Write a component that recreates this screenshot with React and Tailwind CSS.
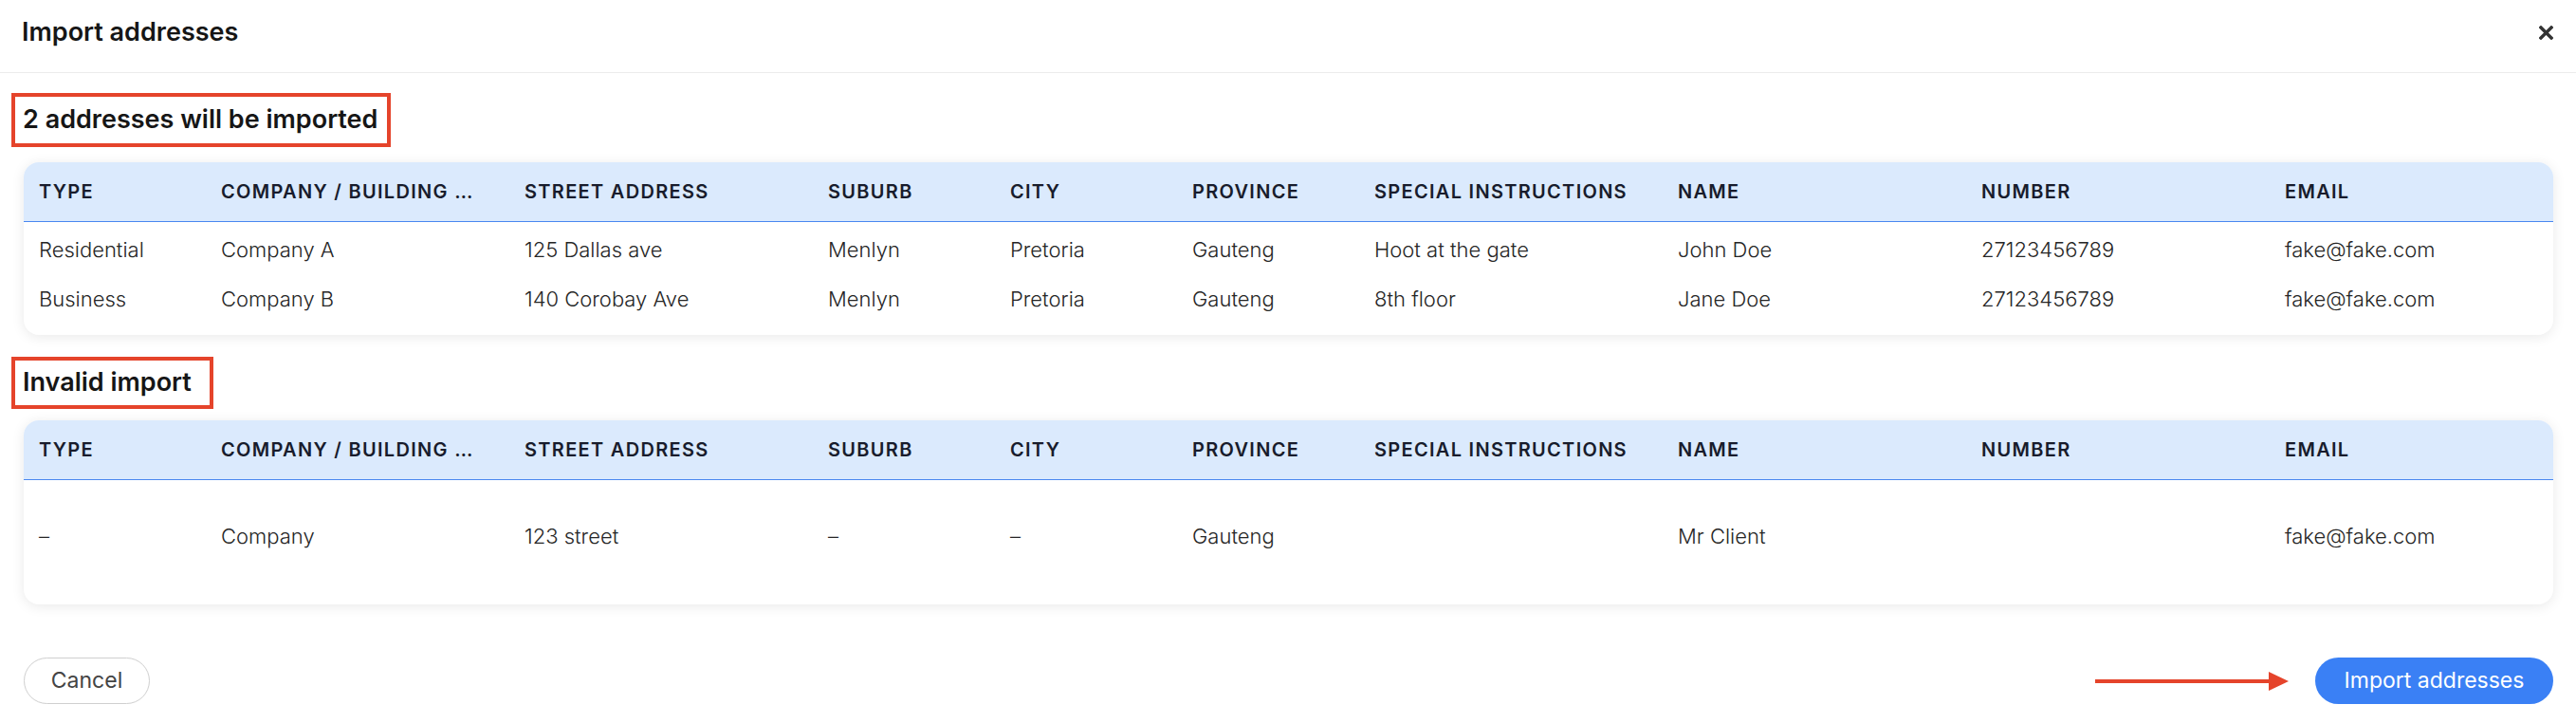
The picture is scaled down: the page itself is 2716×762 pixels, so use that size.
import React from "react";

const COLS = [
  { key: "type", label: "TYPE" },
  { key: "company", label: "COMPANY / BUILDING …" },
  { key: "street", label: "STREET ADDRESS" },
  { key: "suburb", label: "SUBURB" },
  { key: "city", label: "CITY" },
  { key: "province", label: "PROVINCE" },
  { key: "instructions", label: "SPECIAL INSTRUCTIONS" },
  { key: "name", label: "NAME" },
  { key: "number", label: "NUMBER" },
  { key: "email", label: "EMAIL" },
];

const VALID = [
  {
    type: "Residential",
    company: "Company A",
    street: "125 Dallas ave",
    suburb: "Menlyn",
    city: "Pretoria",
    province: "Gauteng",
    instructions: "Hoot at the gate",
    name: "John Doe",
    number: "27123456789",
    email: "fake@fake.com",
  },
  {
    type: "Business",
    company: "Company B",
    street: "140 Corobay Ave",
    suburb: "Menlyn",
    city: "Pretoria",
    province: "Gauteng",
    instructions: "8th floor",
    name: "Jane Doe",
    number: "27123456789",
    email: "fake@fake.com",
  },
];

const INVALID = [
  {
    type: "–",
    company: "Company",
    street: "123 street",
    suburb: "–",
    city: "–",
    province: "Gauteng",
    instructions: "",
    name: "Mr Client",
    number: "",
    email: "fake@fake.com",
  },
];

const GRID = "grid grid-cols-[192px_320px_320px_192px_192px_192px_320px_320px_320px_1fr]";

function AddressTable({ rows, rowClass, bodyClass }) {
  return (
    <div className="rounded-2xl bg-white shadow-[0_2px_14px_rgba(0,0,0,0.09)] overflow-hidden">
      {/* Header band */}
      <div className={`${GRID} h-[63px] items-center bg-[#dbeafd] border-b border-[#4a88f0]`}>
        {COLS.map((c) => (
          <div
            key={c.key}
            className="pl-4 pr-4 truncate text-[20px] font-semibold tracking-[0.065em] text-[#181c2c]"
          >
            {c.label}
          </div>
        ))}
      </div>
      <div className={bodyClass}>
        {rows.map((r, i) => (
          <div key={i} className={`${GRID} items-center ${rowClass}`}>
            {COLS.map((c) => (
              <div key={c.key} className="pl-4 pr-4 truncate text-[22px] font-light text-[#262626]">
                {r[c.key]}
              </div>
            ))}
          </div>
        ))}
      </div>
    </div>
  );
}

function SectionHeading({ children, width }) {
  return (
    <div
      className={`-ml-[13px] flex items-center border-[4px] border-[#e5442b] pl-[8px] text-[27px] font-semibold text-[#161616] ${width}`}
    >
      {children}
    </div>
  );
}

export default function App() {
  return (
    <div className="w-full bg-white font-['Inter','Liberation_Sans',sans-serif]">
      {/* Header */}
      <div className="flex h-[77px] items-start justify-between border-b border-[#ececec] pl-[23px] pr-[24px] pt-[18px]">
        <h2 className="text-[27px] leading-[32px] font-semibold text-[#161616]">Import addresses</h2>
        <button className="mt-[9px] text-[#333]">
          <svg width="15" height="15" viewBox="0 0 15 15" fill="none">
            <path d="M2 2L13 13M13 2L2 13" stroke="currentColor" strokeWidth="3.4" strokeLinecap="square" />
          </svg>
        </button>
      </div>

      <div className="pl-[25px] pr-[24px]">
        <div className="mt-[21px]">
          <SectionHeading width="w-[400px] h-[57px]">2 addresses will be imported</SectionHeading>
        </div>
        <div className="mt-[16px]">
          <AddressTable rows={VALID} rowClass="h-[52px]" bodyClass="pt-[3px] pb-3" />
        </div>

        <div className="mt-[23px]">
          <SectionHeading width="w-[213px] h-[55px]">Invalid import</SectionHeading>
        </div>
        <div className="mt-[12px]">
          <AddressTable rows={INVALID} rowClass="h-[119px]" bodyClass="pb-3" />
        </div>

        {/* Footer */}
        <div className="mt-[56px] flex items-center justify-between pb-[20px]">
          <button className="h-[49px] w-[133px] rounded-full border border-[#cfcfcf] bg-white text-[23px] text-[#444]">
            Cancel
          </button>
          <div className="flex items-center gap-[28px]">
            <svg width="204" height="22" viewBox="0 0 204 22">
              <line x1="0" y1="11" x2="186" y2="11" stroke="#e5442b" strokeWidth="4" />
              <polygon points="183,1 204,11 183,21" fill="#e5442b" />
            </svg>
            <button className="h-[49px] w-[251px] rounded-full bg-[#3a80f5] text-[23px] text-white">
              Import addresses
            </button>
          </div>
        </div>
      </div>
    </div>
  );
}
